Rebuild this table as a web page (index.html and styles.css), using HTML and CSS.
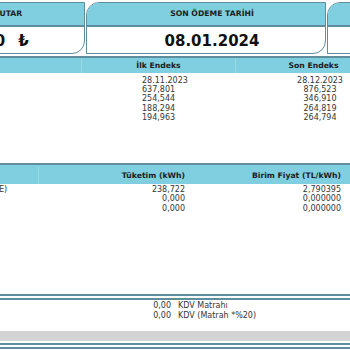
FILE: index.html
```html
<!DOCTYPE html>
<html lang="tr">
<head>
<meta charset="utf-8">
<title>Fatura</title>
<link rel="stylesheet" href="styles.css">
</head>
<body>
<div class="page">
  <div class="cards">
    <div class="card card-first">
      <div class="card-head">ÖDENECEK TUTAR</div>
      <div class="card-body">1.664,50<span class="cur">₺</span></div>
    </div>
    <div class="card">
      <div class="card-head">SON ÖDEME TARİHİ</div>
      <div class="card-body">08.01.2024</div>
    </div>
    <div class="card">
      <div class="card-head">FATURA NO</div>
      <div class="card-body">A0123456789</div>
    </div>
  </div>

  <div class="endeks">
    <div class="e-row e-head">
      <div class="cell"></div>
      <div class="cell ilk div">İlk Endeks</div>
      <div class="cell son div">Son Endeks</div>
      <div class="cell"></div>
    </div>
    <div class="e-body">
      <div class="e-row"><div class="cell"></div><div class="cell ilk">28.11.2023</div><div class="cell son">28.12.2023</div><div class="cell"></div></div>
      <div class="e-row"><div class="cell"></div><div class="cell ilk">637,801</div><div class="cell son">876,523</div><div class="cell"></div></div>
      <div class="e-row"><div class="cell"></div><div class="cell ilk">254,544</div><div class="cell son">346,910</div><div class="cell"></div></div>
      <div class="e-row"><div class="cell"></div><div class="cell ilk">188,294</div><div class="cell son">264,819</div><div class="cell"></div></div>
      <div class="e-row"><div class="cell"></div><div class="cell ilk">194,963</div><div class="cell son">264,794</div><div class="cell"></div></div>
    </div>
  </div>

  <div class="tuketim">
    <div class="t-row t-head">
      <div class="cell label"></div>
      <div class="cell num div">Tüketim (kWh)</div>
      <div class="cell num">Birim Fiyat (TL/kWh)</div>
      <div class="cell"></div>
    </div>
    <div class="t-body">
      <div class="t-row"><div class="cell label">Aktif Enerji (TEK ZAMANLI TARİFE)</div><div class="cell num">238,722</div><div class="cell num">2,790395</div><div class="cell"></div></div>
      <div class="t-row"><div class="cell label">Gündüz (T1)</div><div class="cell num">0,000</div><div class="cell num">0,000000</div><div class="cell"></div></div>
      <div class="t-row"><div class="cell label">Puant (T2)</div><div class="cell num">0,000</div><div class="cell num">0,000000</div><div class="cell"></div></div>
    </div>
  </div>

  <div class="totals">
    <div class="s-row"><div class="amount">0,00</div><div class="s-label">KDV Matrahı</div></div>
    <div class="s-row"><div class="amount">0,00</div><div class="s-label">KDV (Matrah *%20)</div></div>
  </div>
  <div class="grand"></div>
  <div class="footer-rule"></div>
</div>
</body>
</html>
```
FILE: styles.css
```css
* { box-sizing: border-box; }

html, body {
  margin: 0;
  padding: 0;
  background: #ffffff;
}

body {
  width: 350px;
  height: 350px;
  overflow: hidden;
  font-family: "DejaVu Sans", Verdana, sans-serif;
  color: #363636;
}

.page {
  margin-left: -140px;
  width: 560px;
  padding-top: 2px;
}

/* ---------- summary cards ---------- */
.cards {
  display: flex;
  gap: 1px;
  padding-left: 10px;
}

.card {
  flex: none;
  width: 240px;
  height: 52px;
  border: 1px solid #5e8e9e;
  border-radius: 13px 0 13px 0;
  overflow: hidden;
  background: #ffffff;
}

.card-first { width: 215px; }

.card-head {
  height: 24px;
  line-height: 22px;
  padding-left: 12px;
  background: #7fcfe0;
  border-bottom: 2px solid #5e8e9e;
  font-size: 7.7px;
  font-weight: bold;
  color: #1c1c1c;
  text-align: center;
  white-space: nowrap;
}

.card-body {
  height: 26px;
  padding-top: 2px;
  padding-left: 12px;
  line-height: 24px;
  font-size: 15px;
  font-weight: bold;
  color: #111111;
  text-align: center;
  white-space: nowrap;
}

.card-first .card-body { padding-right: 7px; }

.cur { margin-left: 13px; }

/* ---------- endeks table ---------- */
.endeks {
  margin-top: 2px;
  border-top: 2px solid #5e8e9e;
}

.e-row {
  display: grid;
  grid-template-columns: 221px 154px 170px 1fr;
}

.e-head {
  height: 15px;
  line-height: 15px;
  background: #7fcfe0;
  font-size: 7.7px;
  font-weight: bold;
  color: #1c1c1c;
}

.e-head .ilk { text-align: center; }
.e-head .son { text-align: center; padding-right: 14px; }

.div { border-left: 1px solid rgba(255, 255, 255, 0.22); }

.e-body {
  padding-top: 2.5px;
  font-size: 8px;
  line-height: 9.4px;
}

.e-body .ilk { padding-left: 61px; }
.e-body .son { text-align: center; }

/* ---------- consumption table ---------- */
.tuketim {
  margin-top: 40.5px;
  border-top: 2px solid #5e8e9e;
}

.t-row {
  display: grid;
  grid-template-columns: 178px 150px 156px 1fr;
  white-space: nowrap;
}

.t-head {
  height: 19px;
  padding-top: 2px;
  line-height: 17px;
  background: #7fcfe0;
  font-size: 7.7px;
  font-weight: bold;
  color: #1c1c1c;
}

.t-body {
  padding-top: 0.5px;
  font-size: 8px;
  line-height: 9.7px;
}

.label { padding-left: 11px; }
.num { text-align: right; padding-right: 3px; }

/* ---------- totals ---------- */
.totals {
  margin-top: 80.4px;
  border-top: 6px double #5e8e9e;
  padding-top: 0.7px;
  font-size: 8px;
  line-height: 10px;
}

.s-row {
  display: grid;
  grid-template-columns: 314px 1fr;
}

.amount { text-align: right; padding-right: 3px; }
.s-label { padding-left: 4px; }

.grand {
  margin-top: 10.3px;
  height: 10px;
  background: #d3d3d3;
}

.footer-rule {
  margin-top: 2px;
  border-top: 6px double #5e8e9e;
}
```
